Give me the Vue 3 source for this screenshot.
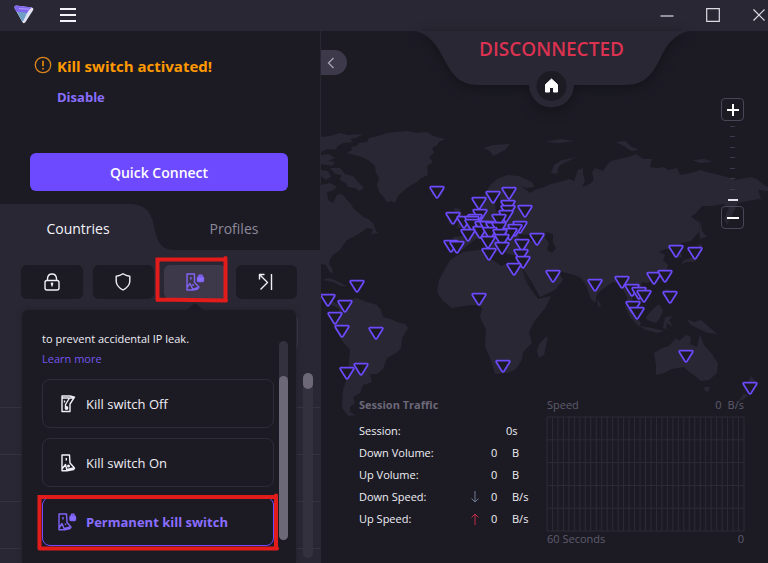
<script setup>
import { ref } from 'vue'

const secureTools = [
  { id: 'core', label: 'Secure Core' },
  { id: 'shield', label: 'NetShield' },
  { id: 'kill', label: 'Kill switch' },
  { id: 'port', label: 'Port forwarding' },
]
const activeTool = ref('kill')

const options = [
  { id: 'off', label: 'Kill switch Off' },
  { id: 'on', label: 'Kill switch On' },
  { id: 'permanent', label: 'Permanent kill switch' },
]
const selected = ref('permanent')

const stats = [
  { label: 'Down Volume:', value: '0', unit: 'B' },
  { label: 'Up Volume:', value: '0', unit: 'B' },
  { label: 'Down Speed:', value: '0', unit: 'B/s', arrow: 'down' },
  { label: 'Up Speed:', value: '0', unit: 'B/s', arrow: 'up' },
]

const servers = [
  [437, 192], [493, 197], [509, 193], [479, 203], [508, 206], [508, 211], [525, 211], [480, 215],
  [506, 216], [453, 218], [464, 222], [475, 220], [472, 222], [499, 220], [472, 225], [482, 227],
  [480, 232], [487, 227], [493, 228], [499, 228], [520, 227], [515, 230], [490, 233], [510, 234],
  [500, 235], [468, 235], [502, 240], [488, 242], [502, 248], [537, 239], [451, 246], [457, 247],
  [489, 254], [522, 245], [521, 255], [523, 262], [514, 269], [357, 286], [328, 300], [345, 306],
  [335, 318], [342, 331], [376, 333], [347, 373], [361, 369], [479, 299], [503, 366], [553, 276],
  [595, 285], [622, 282], [632, 290], [639, 293], [644, 296], [633, 307], [637, 313], [654, 278],
  [665, 276], [670, 297], [676, 251], [695, 253], [686, 356], [750, 388],
]

const gridColumns = Array.from({ length: 37 }, (_, i) => (i * 198) / 36)
const gridRows = Array.from({ length: 6 }, (_, i) => (i * 114) / 5)
</script>

<template>
  <div class="app">
    <header class="titlebar">
      <svg class="logo" width="20" height="19" viewBox="0 0 20 19" aria-hidden="true">
        <path d="M2 .5 18 2.4Q20 3 19.2 5L11.4 17.3Q10 19 8.5 17.2L.5 3Q0 .6 2 .5Z" fill="#e3e2f4" />
        <path d="M2.600 6 14 6 9.500 15.500Q8.500 16.800 7.500 15.400Z" fill="#6f9fc4" />
        <path d="M2 .5 18 2.4 15.5 4.5 13 8Q7 6.5 2.6 7L.5 3Q0 .6 2 .5Z" fill="#8066ee" />
        <path d="M5 3.5 15 4.2" stroke="#b29cff" />
      </svg>
      <button class="menu" aria-label="Menu"><i></i><i></i><i></i></button>
      <div class="window-buttons">
        <button aria-label="Minimize"><svg width="14" height="14" viewBox="0 0 14 14"><path d="M.5 8H13.5" /></svg></button>
        <button aria-label="Maximize"><svg width="14" height="14" viewBox="0 0 14 14"><path d="M.7 .7H13.3V13.3H.7Z" /></svg></button>
        <button aria-label="Close"><svg width="14" height="14" viewBox="0 0 14 14"><path d="M1.5 1.5 12.5 12.5M12.5 1.5 1.5 12.5" /></svg></button>
      </div>
    </header>

    <div class="body">
      <aside class="sidebar">
        <section class="connection">
          <div class="warning">
            <svg width="18" height="18" viewBox="0 0 18 18" aria-hidden="true">
              <circle cx="9" cy="9" r="7.7" fill="none" stroke="#d9861a" stroke-width="1.3" />
              <path d="M9 4.8V10.3M9 12V13.4" stroke="#ff9900" stroke-width="1.5" />
            </svg>
            <strong>Kill switch activated!</strong>
          </div>
          <a class="disable" href="#disable">Disable</a>
          <button class="quick">Quick Connect</button>
        </section>

        <nav class="tabs">
          <svg class="tab-shape" viewBox="0 0 320 46" preserveAspectRatio="none" aria-hidden="true">
            <path d="M128 0C145 0 151 7 154 22C157 37 160 46 175 46H320V0Z" fill="#1c1b24" />
          </svg>
          <button class="tab current">Countries</button>
          <button class="tab">Profiles</button>
        </nav>

        <div class="tools">
          <button
            v-for="tool in secureTools"
            :key="tool.id"
            :class="['tool', { active: tool.id === activeTool }]"
            :aria-label="tool.label"
            @click="activeTool = tool.id"
          >
            <svg v-if="tool.id === 'core'" width="18" height="20" viewBox="0 0 18 20">
              <rect x="2" y="8.5" width="14" height="9.5" rx="2" />
              <path d="M4.5 8.5V6.5Q4.8 2 9 2T13.500 6.500V8.500M9 11.500V14.500" />
              <circle cx="9" cy="11.800" r=".6" />
            </svg>
            <svg v-else-if="tool.id === 'shield'" width="18" height="20" viewBox="0 0 18 20">
              <path d="M9 1.800Q12 4 15.800 4.200V9.500Q15.500 14.500 9 18Q2.500 14.500 2.200 9.500V4.200Q6 4 9 1.800Z" />
            </svg>
            <svg v-else-if="tool.id === 'kill'" class="violet" width="20" height="20" viewBox="0 0 20 20">
              <path d="M2 2H9.500V10.500L14 15 12.500 17 8 18H2ZM2 15.500 5 11.500 8 17.500M8 17.500 13 15.500" />
              <path d="M5.800 5V7.500M8 12V14" />
              <rect x="12.500" y="5" width="6" height="4.500" rx="1" class="solid" />
              <path d="M14 5V3.200H17V5" />
            </svg>
            <svg v-else width="18" height="20" viewBox="0 0 18 20">
              <path d="M14.500 2V18M3.500 17.500 10.500 10.500 3 3M2.500 7.500V2.500H7.500" />
            </svg>
          </button>
        </div>

        <div class="countries">
          <div class="rows"><i></i><i></i><i></i><i></i><i></i></div>
          <div class="search-edge"></div>
          <div class="list-scroll"><i></i></div>

          <section class="popup">
            <span class="pointer"></span>
            <div class="popup-content">
              <p>to prevent accidental IP leak.</p>
              <a href="#learn">Learn more</a>
              <button
                v-for="option in options"
                :key="option.id"
                :class="['option', { chosen: option.id === selected }]"
                @click="selected = option.id"
              >
                <svg width="22" height="20" viewBox="0 0 22 20" aria-hidden="true">
                  <g v-if="option.id === 'off'">
                    <path d="M5 2H13L17.500 3.200 13 10V17.500H5ZM5 4H12.500L17 4M12.500 4 8.500 10.500V13" />
                    <circle cx="9.500" cy="14" r="1.200" class="solid" />
                    <path d="M7.500 6.500V8.500" />
                  </g>
                  <g v-else-if="option.id === 'on'">
                    <path d="M5 2H12.500L13 10 17.500 15 16.500 16.500 10 17.800H5ZM5 16 8.500 11.500 10 17.500M10 16.500 16.500 15" />
                    <path d="M9.300 5V7.500" />
                    <circle cx="11.500" cy="13" r=".8" class="solid" />
                  </g>
                  <g v-else>
                    <path d="M2 2H9.500L10 10.500 14 15 13 16.500 8 17.800H2ZM2 16 5 11.500 7.500 17.500M7.500 16.500 13 15" />
                    <path d="M6 5V7.500M8.500 11.500V13" />
                    <rect x="13" y="4" width="5.500" height="4.500" rx="1" class="solid" />
                    <path d="M14.500 4V2.300H17V4" />
                  </g>
                </svg>
                <span>{{ option.label }}</span>
              </button>
            </div>
            <div class="popup-scroll"><i></i></div>
          </section>
        </div>

        <svg class="marks" width="320" height="563" viewBox="0 0 320 563" aria-hidden="true">
          <path d="M157.500 300V259.500H225.500M225.500 258V300M157.500 299.500 226 300.500" />
          <path d="M39.500 548V497H276M276 495.500V548M39.500 548.500H277" />
        </svg>
      </aside>

      <main class="map-panel">
        <svg class="map" viewBox="321 31 447 532" preserveAspectRatio="xMinYMin slice" role="img" aria-label="Server map">
          <g class="land">
            <path d="M347 153 352 150 351 147 357 146 359 143 367 142 369 138 378 136 387 133 407 131 417 133 427 132 433 136 445 139 439 142 437 145 432 148 434 153 429 157 433 162 427 166 428 175 421 178 417 182 408 187 402 192 398 196 395 203 392 201 387 202 382 195 379 192 377 185 379 178 376 173 375 166 368 160 362 157Z" />
            <path d="M321 137 330 136 340 133 348 135 363 134 356 138 350 139 353 142 343 143 338 146 335 150 327 149 321 152ZM321 155 329 154 335 158 328 161 335 162 332 166 321 164ZM330 168 340 168 345 174 353 176 358 182 364 188 359 191 355 188 348 187 346 183 340 180 341 175 335 174ZM321 170 328 171 331 177 326 180 321 176Z" />
            <path d="M321 185 330 183 337 187 332 191 327 192 328 200 333 203 337 195 342 194 347 200 351 204 353 208 359 213 363 217 368 219 373 223 376 231 378 233 371 234 373 229 367 228 360 233 353 237 347 240 343 245 340 250 333 255 330 259 329 264 332 268 333 274 329 271 326 265 321 264Z" />
            <path d="M323 280 329 278 337 281 347 286 341 286 333 282ZM321 292 328 298 337 304 343 305 340 309 330 304 321 298Z" />
            <path d="M339 304 348 300 357 298 367 302 377 305 381 310 383 317 390 319 397 322 405 324 408 328 404 335 402 338 401 348 396 353 387 358 383 369 377 374 370 374 372 382 363 385 360 393 353 397 355 403 350 407 350 412 356 415 348 416 342 408 343 390 346 381 348 373 350 350 343 342 335 330 332 322 339 313Z" />
            <path d="M450 260 456 256 463 252 478 250 487 250 488 257 493 260 501 266 508 263 521 267 524 274 532 289 538 299 551 296 546 307 534 322 529 332 532 343 523 352 522 360 515 370 507 373 495 374 492 363 485 346 486 330 480 317 482 308 478 305 470 305 452 308 442 300 437 292 439 280Z" />
            <path d="M539 344 546 337 548 337 544 355 539 358 537 351Z" />
            <path d="M480 207 481 199 486 193 490 185 497 179 507 175 519 176 532 182 534 187 526 188 521 186 530 193 535 190 544 187 551 184 560 182 569 179 574 181 578 170 583 168 583 174 585 181 582 187 588 185 594 180 592 172 595 168 603 171 607 165 611 161 628 157 636 154 643 159 652 159 650 167 657 168 664 167 668 170 677 168 680 175 691 173 701 170 706 172 711 173 727 177 735 180 751 177 757 179 764 185 768 187 768 191 758 190 761 199 753 200 743 202 738 203 733 213 727 225 724 219 729 207 723 204 712 206 702 206 696 213 691 217 699 222 699 232 691 241 681 243 679 248 682 257 676 258 673 249 665 249 659 252 665 255 663 260 668 265 666 272 657 278 647 283 642 282 641 288 647 296 640 302 633 295 632 300 639 310 637 317 629 307 627 297 620 284 613 282 604 288 597 294 595 303 591 299 586 285 581 278 574 275 558 271 563 280 555 290 540 297 533 284 523 269 524 258 512 255 503 252 501 243 496 253 484 239 476 239 467 246 461 251 452 249 453 237 463 236 461 229 471 223 478 218 485 216 487 210Z" />
            <path d="M454 208 460 209 464 220 467 227 457 228 459 221 455 215ZM447 218 452 216 455 221 450 225ZM431 190 438 187 444 190 441 196 432 195ZM483 148 493 145 510 144 505 150 493 156 490 151ZM551 173 554 165 562 160 577 157 566 162 559 166 557 174ZM616 142 626 141 630 146 639 150 631 151 624 146ZM544 142 560 139 574 141 560 143ZM692 160 704 159 713 162 700 163Z" />
            <path d="M700 219 702 231 707 237 700 239 699 230ZM681 265 684 260 691 258 696 253 699 244 702 245 700 255 694 262 686 262ZM665 276 668 272 668 279ZM597 299 601 305 598 307ZM624 304 633 313 641 323 639 327 630 317ZM639 326 652 328 664 331 658 333 646 330ZM646 317 654 308 659 304 663 310 660 318 656 323 647 320ZM665 317 673 316 669 320 673 327 667 323 666 329 663 328ZM665 289 669 290 673 302 667 299ZM686 319 694 322 701 320 709 327 717 334 708 333 697 328 691 325Z" />
            <path d="M654 353 662 348 669 346 676 338 679 341 686 335 691 337 690 344 697 347 700 334 704 345 711 353 718 363 717 373 709 380 701 381 694 375 689 372 684 367 672 369 664 373 656 375 656 365ZM704 387 710 387 708 392 705 391ZM751 376 757 383 752 388 748 382ZM744 393 748 396 742 400 738 402Z" />
          </g>
          <path class="water" d="M546 232 553 234 553 243 556 248 552 253 547 250 549 243 545 238ZM519 234 531 235 536 240 526 242 519 241ZM497 195 500 193 500 202 505 205 504 212 497 213 495 207Z" />
          <path class="water" d="M667 250 671 250 674 256 671 262 666 257ZM522 273 534 291 536 293 539 298 535 295 528 285Z" />
          <g class="pins">
            <path v-for="(p, i) in servers" :key="i" :transform="`translate(${p[0]} ${p[1]})`" d="M-6-5.300H6Q7.400-5 6.500-3.500L1 5.300Q0 6.600-1 5.300L-6.500-3.500Q-7.400-5-6-5.300Z" />
          </g>
        </svg>

        <button class="collapse" aria-label="Collapse sidebar">
          <svg width="8" height="12" viewBox="0 0 8 12"><path d="M6.500 1 1.500 6 6.500 11" /></svg>
        </button>

        <div class="status">
          <svg class="notch" width="272" height="80" viewBox="0 0 272 80" aria-hidden="true">
            <path d="M0 0C14 4 20 13 28 28C35 42 43 54 62 54H113A22.500 22.500 0 0 0 158 54H210C229 54 237 42 244 28C251 13 258 4 272 0Z" fill="#292733" />
            <circle cx="135.500" cy="55" r="15" fill="#1c1b24" />
            <path d="M129.500 53.500 135.500 48 141.500 53.500V61H137.500V56.500H133.500V61H129.500Z" fill="#fff" stroke="#fff" stroke-linejoin="round" />
          </svg>
          <h1>DISCONNECTED</h1>
        </div>

        <div class="zoom">
          <button aria-label="Zoom in"><svg width="12" height="12" viewBox="0 0 12 12"><path d="M0 6H12M6 0V12" /></svg></button>
          <div class="ticks"><i></i><i></i><i></i><i></i><i></i><i></i><i></i><i class="level"></i></div>
          <button aria-label="Zoom out"><svg width="12" height="12" viewBox="0 0 12 12"><path d="M0 6H12" /></svg></button>
        </div>

        <section class="traffic">
          <div class="session">
            <h2>Session Traffic</h2>
            <table>
              <tbody>
                <tr>
                  <th scope="row">Session:</th>
                  <td class="duration" colspan="3"><span>0s</span></td>
                </tr>
                <tr v-for="row in stats" :key="row.label">
                  <th scope="row">{{ row.label }}</th>
                  <td class="arrow">
                    <svg v-if="row.arrow" :class="row.arrow" width="8" height="12" viewBox="0 0 8 12" aria-hidden="true">
                      <path v-if="row.arrow === 'down'" d="M4 0V11M.5 7.500 4 11 7.500 7.500" />
                      <path v-else d="M4 12V1M.5 4.500 4 1 7.500 4.500" />
                    </svg>
                  </td>
                  <td class="value">{{ row.value }}</td>
                  <td class="unit">{{ row.unit }}</td>
                </tr>
              </tbody>
            </table>
          </div>
          <div class="graph">
            <div class="caption"><span>Speed</span><span class="rate"><span>0</span><span>B/s</span></span></div>
            <svg viewBox="0 0 198 114" preserveAspectRatio="none" aria-hidden="true">
              <path v-for="x in gridColumns" :key="'c' + x" :d="`M${x} 0V114`" />
              <path v-for="y in gridRows" :key="'r' + y" :d="`M0 ${y}H198`" />
            </svg>
            <div class="caption"><span>60 Seconds</span><span>0</span></div>
          </div>
        </section>
      </main>
    </div>
  </div>
</template>

<style>
body {
  background: #1c1b24;
}
</style>

<style scoped>
.app {
  display: flex;
  flex-direction: column;
  height: 100vh;
  overflow: hidden;
  background: #1c1b24;
  color: #efeef5;
  font-family: "Open Sans", "Noto Sans", sans-serif;
  font-size: 12px;
}
* {
  box-sizing: border-box;
}
button {
  padding: 0;
  border: 0;
  background: none;
  color: inherit;
  font: inherit;
  cursor: pointer;
}
a {
  text-decoration: none;
}
svg {
  display: block;
  flex: none;
}
.titlebar {
  display: flex;
  align-items: center;
  flex: none;
  height: 31px;
  padding: 0 2px 2px 14px;
  background: #292733;
}
.menu {
  display: grid;
  gap: 4px;
  width: 16px;
  margin-left: 26px;
}
.menu i {
  height: 2px;
  background: #f4f3fa;
}
.window-buttons {
  display: flex;
  gap: 32px;
  margin-left: auto;
}
.window-buttons svg {
  fill: none;
  stroke: #dddce3;
  stroke-width: 1.200;
}
.body {
  display: flex;
  flex: 1;
  min-height: 0;
}
.sidebar {
  display: flex;
  flex-direction: column;
  flex: none;
  width: 321px;
  border-right: 1px solid #292733;
  background: #292733;
}
.connection {
  display: flex;
  flex-direction: column;
  height: 173px;
  padding: 24px 32px 13px 30px;
  background: #1c1b24;
}
.warning {
  display: flex;
  align-items: center;
  gap: 5px;
  padding-left: 4px;
  color: #ff9900;
  font-size: 15px;
  line-height: 22px;
}
.warning svg {
  margin-bottom: 2px;
}
.warning strong {
  font-weight: 700;
}
.disable {
  margin: 10px 0 0 27px;
  color: #8a6eff;
  font-size: 13px;
  font-weight: 700;
  line-height: 20px;
}
.quick {
  height: 38px;
  margin-top: auto;
  border-radius: 6px;
  background: #6d4aff;
  color: #fff;
  font-size: 14px;
  font-weight: 600;
}
.tabs {
  position: relative;
  display: grid;
  grid-template-columns: 1fr 1fr;
  height: 46px;
}
.tab-shape {
  position: absolute;
  inset: 0;
  width: 100%;
  height: 100%;
}
.tab {
  position: relative;
  padding: 2px 12px 0 0;
  color: #8d899b;
  font-size: 14px;
}
.tab.current {
  padding-right: 4px;
  color: #f4f3fa;
}
.tools {
  display: grid;
  grid-template-columns: repeat(4, 1fr);
  gap: 10px;
  padding: 15px 23px 11px 21px;
}
.tool {
  display: flex;
  align-items: center;
  justify-content: center;
  height: 34px;
  border-radius: 6px;
  background: #1c1b24;
}
.tool.active {
  background: #3d394a;
}
.tool svg,
.option svg {
  fill: none;
  stroke: #f0eff6;
  stroke-width: 1.400;
  stroke-linejoin: round;
}
.tool .violet,
.chosen svg {
  stroke: #8064f5;
}
.solid {
  fill: #f0eff6;
}
.violet .solid,
.chosen .solid {
  fill: #8a6eff;
}
.countries {
  position: relative;
  flex: 1;
  min-height: 0;
}
.rows {
  padding-top: 51px;
}
.rows i {
  display: block;
  height: 47px;
  border-bottom: 1px solid #363341;
}
.search-edge {
  position: absolute;
  top: 7px;
  right: 22px;
  width: 40px;
  height: 32px;
  border: 1px solid #3d394a;
  border-radius: 4px;
}
.list-scroll {
  position: absolute;
  top: 63px;
  right: 7px;
  bottom: 5px;
  width: 10px;
  border-radius: 5px;
  background: #34313f;
}
.list-scroll i {
  display: block;
  height: 16px;
  border-radius: 5px;
  background: #6c6878;
}
.popup {
  position: absolute;
  inset: 0 24px 0 22px;
  display: flex;
  gap: 5px;
  padding: 19px 8px 0 20px;
  border-radius: 6px 6px 0 0;
  background: #1c1b24;
  box-shadow: 0 0 5px #1c1b2480;
}
.pointer {
  position: absolute;
  top: -7px;
  left: 165px;
  border: solid transparent;
  border-width: 0 8px 7px;
  border-bottom-color: #1c1b24;
}
.popup-content {
  display: flex;
  flex-direction: column;
  flex: 1;
  gap: 10px;
}
.popup-content p,
.popup-content a {
  margin: 0;
  font-size: 11px;
  line-height: 20px;
}
.popup-content a {
  margin-top: -10px;
  color: #7556ee;
}
.option {
  display: flex;
  align-items: center;
  gap: 7px;
  height: 49px;
  padding: 0 14px;
  border: 1px solid #2e2c38;
  border-radius: 8px;
  font-size: 13px;
  text-align: left;
}
.option.chosen {
  border-color: #6d4aff;
  color: #8a6eff;
  font-weight: 700;
}
.popup-scroll {
  width: 9px;
  height: 199px;
  margin-top: 12px;
  padding-top: 35px;
  border-radius: 5px;
  background: #34313f;
}
.popup-scroll i {
  display: block;
  height: 164px;
  border-radius: 5px;
  background: #6c6878;
}
.marks {
  position: absolute;
  top: 0;
  left: 0;
  fill: none;
  stroke: #e21b1b;
  stroke-width: 4;
  stroke-linecap: round;
  pointer-events: none;
}
.map-panel {
  position: relative;
  display: flex;
  flex-direction: column;
  justify-content: space-between;
  flex: 1;
  min-width: 0;
}
.map {
  position: absolute;
  inset: 0;
  width: 100%;
  height: 100%;
}
.land {
  fill: #292733;
}
.water {
  fill: #1c1b24;
}
.pins path {
  fill: #1c1b24;
  stroke: #6d4aff;
  stroke-width: 1.700;
}
.collapse {
  position: absolute;
  top: 19px;
  left: 0;
  display: flex;
  align-items: center;
  width: 26px;
  height: 25px;
  padding-left: 6px;
  border-radius: 0 13px 13px 0;
  background: #3d394a;
}
.collapse svg {
  fill: none;
  stroke: #a7a4b5;
  stroke-width: 1.300;
}
.status {
  position: relative;
  align-self: center;
  width: 272px;
  height: 80px;
  margin-left: 14px;
}
.notch {
  position: absolute;
  inset: 0;
  overflow: visible;
  filter: drop-shadow(0 4px 6px #14131a);
}
.status h1 {
  position: relative;
  margin: 0;
  padding-top: 3px;
  color: #dc3251;
  font-size: 19px;
  font-weight: 600;
  line-height: 30px;
  text-align: center;
}
.zoom {
  position: absolute;
  top: 67px;
  right: 24px;
  width: 23px;
}
.zoom button {
  display: grid;
  place-items: center;
  width: 23px;
  height: 23px;
  border: 1px solid #4a4658;
  border-radius: 4px;
}
.zoom button svg {
  stroke: #fff;
  stroke-width: 2;
}
.ticks {
  display: flex;
  flex-direction: column;
  align-items: center;
  justify-content: space-between;
  height: 85px;
  padding: 5px 0;
}
.ticks i {
  width: 5px;
  height: 1px;
  background: #3d394a;
}
.ticks .level {
  width: 10px;
  height: 2px;
  background: #e5e4ed;
}
.traffic {
  position: relative;
  display: flex;
  justify-content: space-between;
  padding: 0 24px 14px 38px;
}
.session h2 {
  margin: 0 0 5px;
  color: #6c6878;
  font-size: 11px;
  font-weight: 700;
  line-height: 20px;
}
table {
  border-collapse: collapse;
  font-size: 11px;
}
tr {
  height: 22px;
}
th,
td {
  padding: 0;
  font-weight: 400;
  line-height: 20px;
  text-align: left;
}
th {
  width: 112px;
}
.arrow {
  width: 20px;
}
.value {
  width: 21px;
}
.unit {
  width: 22px;
}
.duration {
  padding-left: 35px;
}
.arrow svg {
  fill: none;
}
.down {
  stroke: #6f7b96;
}
.up {
  stroke: #c12d49;
}
.graph {
  width: 197px;
  color: #5f5b6c;
  font-size: 11px;
}
.graph svg {
  width: 100%;
  height: 114px;
  margin: 2px 0 -2px;
  overflow: visible;
  stroke: #2d2b36;
}
.caption {
  display: flex;
  justify-content: space-between;
  line-height: 20px;
}
.rate {
  display: flex;
  gap: 6px;
}
</style>
